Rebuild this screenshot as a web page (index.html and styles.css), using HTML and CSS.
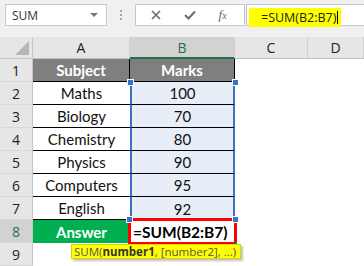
FILE: index.html
```html
<!DOCTYPE html>
<html lang="en">
<head>
  <meta charset="UTF-8">
  <title>SUM formula</title>
  <link rel="stylesheet" href="styles.css">
</head>
<body>
  <!-- Formula bar -->
  <div class="toolbar">
    <div class="name-box">
      <span>SUM</span>
      <span class="drop"></span>
    </div>
    <div class="grip">
      <span></span><span></span><span></span>
    </div>
    <div class="fx-buttons">
      <svg class="icon" width="10" height="10" viewBox="0 0 10 10">
        <path d="M1 1 L9 9 M9 1 L1 9" stroke="#6b6b6b" stroke-width="1.6" fill="none"/>
      </svg>
      <svg class="icon" width="12" height="10" viewBox="0 0 12 10">
        <path d="M1 5 L4.5 8.5 L11 1.5" stroke="#6b6b6b" stroke-width="2" fill="none"/>
      </svg>
      <span class="fx">f<i>x</i></span>
    </div>
    <div class="formula-input">
      <span class="formula-text">=SUM(B2:B7)<span class="cursor"></span></span>
    </div>
  </div>

  <!-- Sheet -->
  <div class="sheet">
    <div class="row head-row">
      <div class="cell c-hd corner"><span class="tri"></span></div>
      <div class="cell c-a col-head">A</div>
      <div class="cell c-b col-head active">B</div>
      <div class="cell c-c col-head">C</div>
      <div class="cell c-d col-head">D</div>
    </div>
    <div class="row">
      <div class="cell c-hd row-head">1</div>
      <div class="cell c-a title">Subject</div>
      <div class="cell c-b title">Marks</div>
      <div class="cell c-c"></div>
      <div class="cell c-d"></div>
    </div>
    <div class="row">
      <div class="cell c-hd row-head">2</div>
      <div class="cell c-a data">Maths</div>
      <div class="cell c-b sel">100</div>
      <div class="cell c-c"></div>
      <div class="cell c-d"></div>
    </div>
    <div class="row">
      <div class="cell c-hd row-head">3</div>
      <div class="cell c-a data">Biology</div>
      <div class="cell c-b sel">70</div>
      <div class="cell c-c"></div>
      <div class="cell c-d"></div>
    </div>
    <div class="row">
      <div class="cell c-hd row-head">4</div>
      <div class="cell c-a data">Chemistry</div>
      <div class="cell c-b sel">80</div>
      <div class="cell c-c"></div>
      <div class="cell c-d"></div>
    </div>
    <div class="row">
      <div class="cell c-hd row-head">5</div>
      <div class="cell c-a data">Physics</div>
      <div class="cell c-b sel">90</div>
      <div class="cell c-c"></div>
      <div class="cell c-d"></div>
    </div>
    <div class="row">
      <div class="cell c-hd row-head">6</div>
      <div class="cell c-a data">Computers</div>
      <div class="cell c-b sel">95</div>
      <div class="cell c-c"></div>
      <div class="cell c-d"></div>
    </div>
    <div class="row">
      <div class="cell c-hd row-head">7</div>
      <div class="cell c-a data">English</div>
      <div class="cell c-b sel last">92</div>
      <div class="cell c-c"></div>
      <div class="cell c-d"></div>
    </div>
    <div class="row">
      <div class="cell c-hd row-head active">8</div>
      <div class="cell c-a answer">Answer</div>
      <div class="cell c-b editing">=SUM(B2:B7)<span class="fill-handle"></span></div>
      <div class="cell c-c"></div>
      <div class="cell c-d"></div>
    </div>
    <div class="row">
      <div class="cell c-hd row-head">9</div>
      <div class="cell c-a"></div>
      <div class="cell c-b"></div>
      <div class="cell c-c"></div>
      <div class="cell c-d"></div>
    </div>

    <!-- selection handles -->
    <span class="handle h-tl"></span>
    <span class="handle h-tr"></span>
    <span class="handle h-bl"></span>
    <span class="handle h-br"></span>

    <!-- function tooltip -->
    <div class="tooltip">SUM(<b>number1</b>, [number2], ...)</div>
  </div>
</body>
</html>
```

FILE: styles.css
```css
body {
  margin: 0;
  padding: 0;
  width: 364px;
  height: 266px;
  overflow: hidden;
  background: #fff;
  font-family: Lato, "Liberation Sans", sans-serif;
}

/* Formula bar */
.toolbar {
  display: flex;
  align-items: flex-start;
  height: 37px;
  padding-top: 4px;
  box-sizing: border-box;
  background: #f0f0f0;
}

.name-box {
  display: flex;
  align-items: center;
  justify-content: space-between;
  width: 102px;
  height: 22px;
  margin-left: 5px;
  padding: 0 8px 0 6px;
  box-sizing: border-box;
  background: #fff;
  border: 1px solid #c8c8c8;
  font-family: "Open Sans", sans-serif;
  font-size: 12px;
  color: #333;
}

.drop {
  width: 0;
  height: 0;
  border-left: 4px solid transparent;
  border-right: 4px solid transparent;
  border-top: 4px solid #777;
}

.grip {
  display: flex;
  flex-direction: column;
  gap: 2px;
  margin: 6px 13px 0 13px;
}

.grip span {
  width: 2px;
  height: 2px;
  background: #a8a8a8;
}

.fx-buttons {
  display: flex;
  align-items: center;
  justify-content: space-around;
  width: 110px;
  height: 22px;
  padding: 0 6px 0 4px;
  box-sizing: border-box;
  background: #fff;
  border: 1px solid #c8c8c8;
}

.fx {
  font-family: "Liberation Serif", serif;
  font-style: italic;
  font-size: 13px;
  color: #666;
}

.fx i {
  font-size: 10px;
}

.formula-input {
  flex: 1;
  height: 22px;
  margin-left: 1px;
  padding: 1px 0 0 2px;
  box-sizing: border-box;
  background: #fff;
  border: 1px solid #c8c8c8;
  border-right: none;
}

.formula-text {
  display: inline-flex;
  align-items: center;
  width: 92px;
  height: 19px;
  padding-left: 12px;
  box-sizing: border-box;
  background: #ffff00;
  font-family: "Open Sans", sans-serif;
  font-size: 12.5px;
  color: #222;
}

.cursor {
  width: 1px;
  height: 13px;
  margin-left: 1px;
  background: #000;
}

/* Sheet grid */
.sheet {
  position: relative;
}

.row {
  display: flex;
  height: 23px;
}

.head-row {
  height: 22px;
}

.cell {
  display: flex;
  align-items: center;
  justify-content: center;
  box-sizing: border-box;
  font-size: 15px;
  color: #111;
}

.c-hd { width: 33px; }
.c-a { width: 97px; }
.c-b { width: 105px; }
.c-c { width: 73px; }
.c-d { width: 56px; }

.corner {
  position: relative;
  background: #e6e6e6;
  border-right: 1px solid #c6c6c6;
  border-bottom: 1px solid #c6c6c6;
}

.tri {
  position: absolute;
  right: 3px;
  bottom: 3px;
  width: 0;
  height: 0;
  border-left: 14px solid transparent;
  border-bottom: 14px solid #b6b6b6;
}

.col-head {
  background: #e6e6e6;
  border-right: 1px solid #d0d0d0;
  border-bottom: 1px solid #bdbdbd;
  font-family: "Open Sans", sans-serif;
  font-size: 14px;
  color: #222;
}

.col-head.active {
  background: #d2d2d2;
  border-bottom: 2px solid #217346;
  color: #217346;
}

.row-head {
  background: #e6e6e6;
  border-right: 1px solid #c6c6c6;
  border-bottom: 1px solid #d8d8d8;
  font-family: "Open Sans", sans-serif;
  font-size: 14px;
  color: #222;
}

.row-head.active {
  background: #d2d2d2;
  color: #217346;
}

.title {
  background: #7f7f7f;
  color: #fff;
  font-weight: bold;
  border-right: 1px solid #000;
  border-bottom: 1px solid #000;
}

.data {
  border-bottom: 1px solid #000;
}

.sel {
  background: #e8eef8;
  border-left: 2px solid #3a72c9;
  border-right: 2px solid #3a72c9;
  border-bottom: 1px solid #000;
}

.sel.last {
  border-bottom: none;
}

.answer {
  background: #00b050;
  color: #fff;
  font-weight: bold;
}

.editing {
  position: relative;
  justify-content: flex-start;
  padding-left: 3px;
  outline: 3px solid #ff0000;
  outline-offset: -1px;
  font-weight: bold;
  font-size: 15.5px;
  color: #000;
}

.fill-handle {
  position: absolute;
  right: -2px;
  bottom: -2px;
  width: 3px;
  height: 3px;
  background: #217346;
}

/* selection handles over B2:B7 */
.handle {
  position: absolute;
  width: 5px;
  height: 5px;
  background: #3a72c9;
  border: 1px solid #fff;
}

.h-tl { left: 127px; top: 42px; }
.h-tr { left: 232px; top: 42px; }
.h-bl { left: 126px; top: 179px; }
.h-br { left: 232px; top: 179px; }

.tooltip {
  position: absolute;
  left: 71px;
  top: 207px;
  height: 13px;
  padding: 0 4px 0 2px;
  background: #ffff00;
  border: 1px solid #d6d600;
  box-shadow: 2px 2px 2px rgba(0, 0, 0, 0.25);
  font-family: "Open Sans", sans-serif;
  font-size: 11.5px;
  line-height: 13px;
  color: #555;
  white-space: nowrap;
}

.tooltip b {
  color: #333;
}
```
